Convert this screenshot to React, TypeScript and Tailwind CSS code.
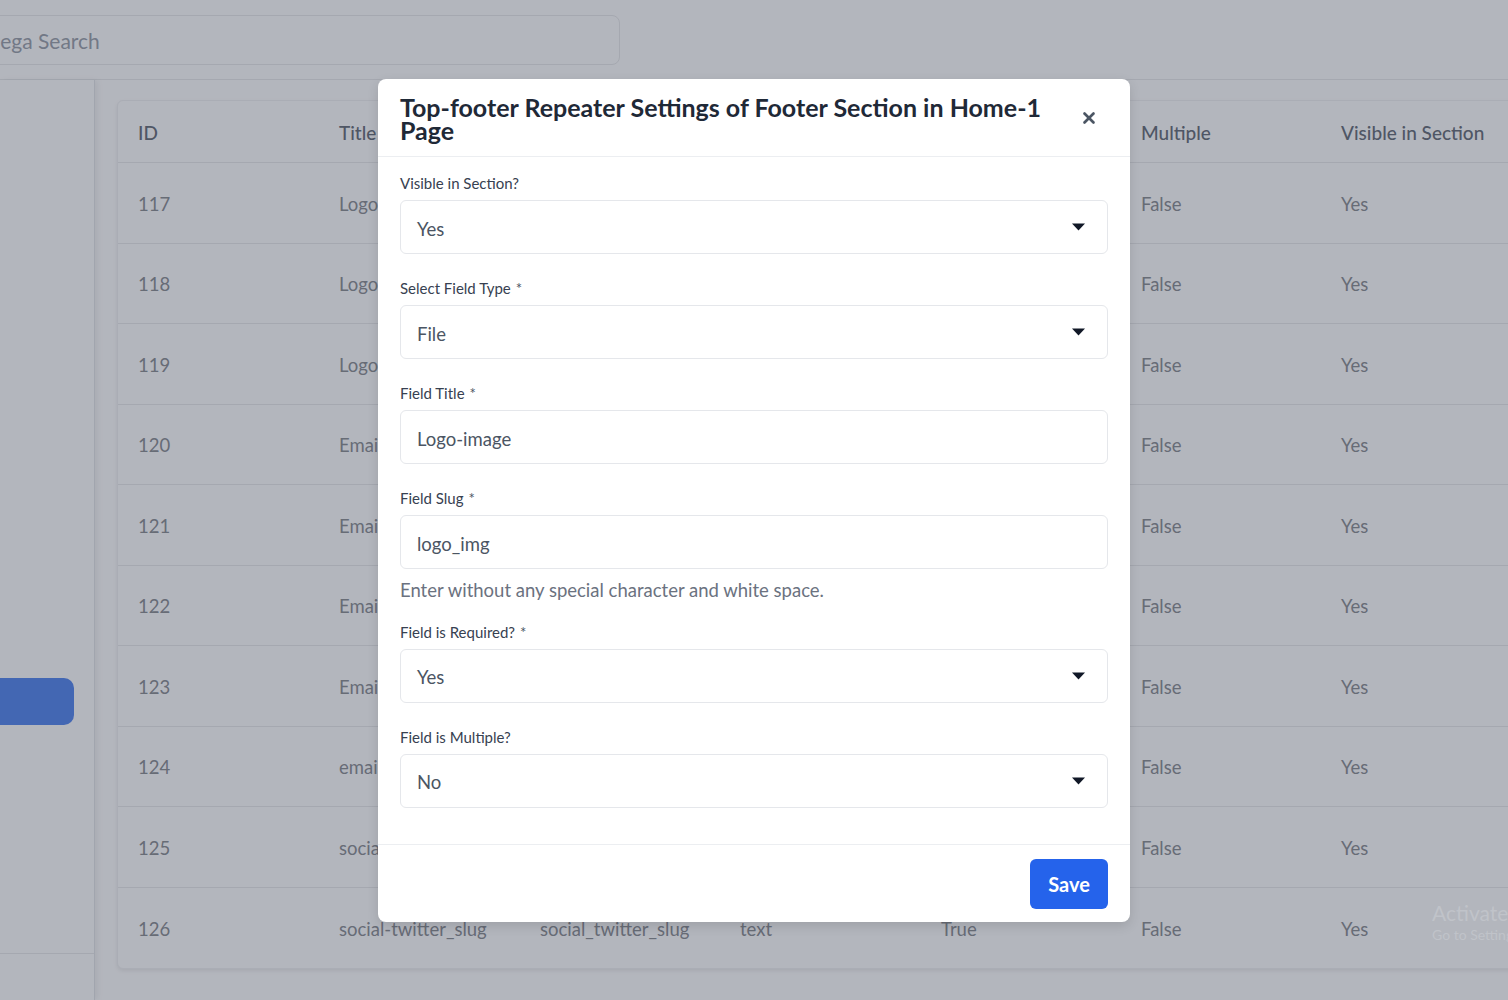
import { X } from "lucide-react";

const ROWS = [
  { id: 117, title: "Logo-image", slug: "logo_img", type: "file", req: "True" },
  { id: 118, title: "Logo-link", slug: "logo_link", type: "text", req: "True" },
  { id: 119, title: "Logo-alt", slug: "logo_alt", type: "text", req: "True" },
  { id: 120, title: "Email-title", slug: "email_title", type: "text", req: "True" },
  { id: 121, title: "Email-text", slug: "email_text", type: "text", req: "True" },
  { id: 122, title: "Email-link", slug: "email_link", type: "text", req: "True" },
  { id: 123, title: "Email-icon", slug: "email_icon", type: "file", req: "True" },
  { id: 124, title: "email-address", slug: "email_address", type: "text", req: "True" },
  { id: 125, title: "social-facebook_slug", slug: "social_facebook_slug", type: "text", req: "True" },
  { id: 126, title: "social-twitter_slug", slug: "social_twitter_slug", type: "text", req: "True" },
];

const HEADERS = ["ID", "Title", "Slug", "Type", "Required", "Multiple", "Visible in Section"];

function Caret() {
  return (
    <svg width="13" height="8" viewBox="0 0 13 8" className="shrink-0">
      <path d="M0 0.5h13L6.5 7.5z" fill="#111827" />
    </svg>
  );
}

function SelectField({ label, value, required }: { label: string; value: string; required?: boolean }) {
  return (
    <div>
      <label className="block text-[15px] leading-5 text-[#374151] mb-[7px]">
        {label}
        {required && <span className="ml-[5px] text-[#4b5563]">*</span>}
      </label>
      <div className="h-[54px] flex items-center justify-between rounded-md border border-[#e5e7eb] pl-4 pr-[22px]">
        <span className="text-[18.5px] text-[#4b5563] pt-[5px]">{value}</span>
        <Caret />
      </div>
    </div>
  );
}

function InputField({ label, value }: { label: string; value: string }) {
  return (
    <div>
      <label className="block text-[15px] leading-5 text-[#374151] mb-[7px]">
        {label}
        <span className="ml-[5px] text-[#4b5563]">*</span>
      </label>
      <div className="h-[54px] flex items-center rounded-md border border-[#e5e7eb] px-4">
        <span className="text-[18.5px] text-[#4b5563] pt-[5px]">{value}</span>
      </div>
    </div>
  );
}

export default function App() {
  return (
    <div
      className="relative w-[1508px] h-[1000px] overflow-hidden bg-[#fafbfe]"
      style={{ fontFamily: "Lato, 'Noto Sans', sans-serif" }}
    >
      {/* ===== top bar ===== */}
      <div className="h-[80px] border-b border-[#e5e7eb] flex items-center">
        <div className="-ml-[36px] w-[656px] h-[50px] rounded-lg border border-[#e5e7eb] flex items-center pl-4">
          <span className="text-[21px] text-[#9ca3af] pt-[2px]">Mega Search</span>
        </div>
      </div>

      <div className="flex h-[920px]">
        {/* ===== sidebar ===== */}
        <aside className="w-[95px] shrink-0 border-r border-[#e0e2e8] shadow-[3px_0_6px_rgba(0,0,0,0.06)] flex flex-col">
          <div className="h-[598px]" />
          <div className="h-[47px] w-[74px] bg-[#5a8af0] rounded-r-[10px]" />
          <div className="flex-1" />
          <div className="h-[47px] border-t border-[#e5e7eb]" />
        </aside>

        {/* ===== table ===== */}
        <main className="flex-1 pl-[22px] pt-[20px]">
          <div className="w-[1420px] rounded-md border border-[#eceef2] shadow-[0_2px_4px_rgba(0,0,0,0.08)] bg-[#fafbfe]">
            <div className="grid grid-cols-[201px_201px_200px_201px_200px_200px_217px] h-[62px] items-center pt-[4px] border-b border-[#e5e7eb] text-[19px] font-medium text-[#6b7280]">
              {HEADERS.map((h) => (
                <div key={h} className="pl-[20px]">
                  {h}
                </div>
              ))}
            </div>
            {ROWS.map((r, i) => (
              <div
                key={r.id}
                className={`grid grid-cols-[201px_201px_200px_201px_200px_200px_217px] h-[80.5px] items-center pt-[4px] text-[18.5px] text-[#8d9199] ${
                  i < ROWS.length - 1 ? "border-b border-[#e5e7eb]" : ""
                }`}
              >
                <div className="pl-[20px]">{r.id}</div>
                <div className="pl-[20px] whitespace-nowrap">{r.title}</div>
                <div className="pl-[20px] whitespace-nowrap">{r.slug}</div>
                <div className="pl-[20px]">{r.type}</div>
                <div className="pl-[20px]">{r.req}</div>
                <div className="pl-[20px]">False</div>
                <div className="pl-[20px]">Yes</div>
              </div>
            ))}
          </div>
        </main>
      </div>

      {/* ===== overlay ===== */}
      <div className="absolute inset-0 bg-[rgba(17,24,39,0.3)]" />

      {/* windows watermark */}
      <div className="absolute left-[1432px] top-[900px] text-[#c0c3c9] leading-tight whitespace-nowrap">
        <div className="text-[21px]">Activate Windows</div>
        <div className="text-[14px]">Go to Settings to activate Windows.</div>
      </div>

      {/* ===== modal ===== */}
      <div className="absolute left-[378px] top-[79px] w-[752px] h-[843px] bg-white rounded-lg shadow-[0_4px_12px_rgba(0,0,0,0.12)] flex flex-col">
        <div className="h-[78px] border-b border-[#eceef1] flex items-start justify-between pl-[22px] pr-[32px] pt-[17px]">
          <h2 className="text-[25px] font-bold leading-[23px] text-[#1f2937] w-[660px]">
            Top-footer Repeater Settings of Footer Section in Home-1 Page
          </h2>
          <X className="mt-[13px] w-[18px] h-[18px] text-[#4b5563]" strokeWidth={3.5} />
        </div>

        <div className="flex-1 px-[22px] pt-[16px] flex flex-col gap-[24px]">
          <SelectField label="Visible in Section?" value="Yes" />
          <SelectField label="Select Field Type" value="File" required />
          <InputField label="Field Title" value="Logo-image" />
          <div>
            <InputField label="Field Slug" value="logo_img" />
            <p className="mt-[8px] text-[18.5px] text-[#6b7280]">Enter without any special character and white space.</p>
          </div>
          <div className="-mt-[7px]">
            <SelectField label="Field is Required?" value="Yes" required />
          </div>
          <SelectField label="Field is Multiple?" value="No" />
        </div>

        <div className="h-[78px] border-t border-[#eceef1] flex items-center justify-end px-[22px]">
          <button className="w-[78px] h-[50px] rounded-md bg-[#2563eb] text-white text-[20px] font-bold">Save</button>
        </div>
      </div>
    </div>
  );
}
